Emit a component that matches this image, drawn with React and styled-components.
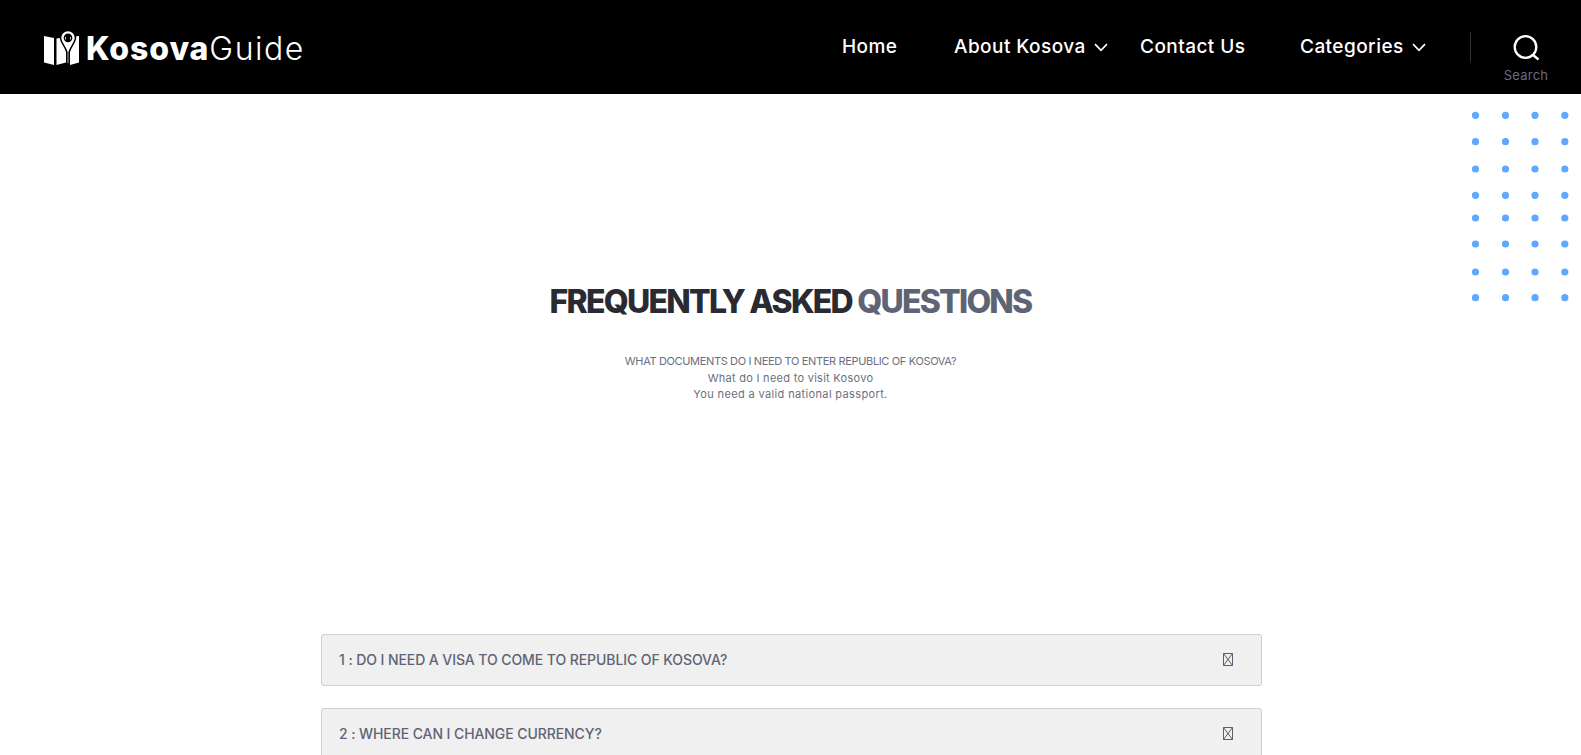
import React from "react";
import styled, { createGlobalStyle } from "styled-components";

const Global = createGlobalStyle`
  html, body { margin: 0; padding: 0; background: #fff; }
  body { font-family: Inter, "Liberation Sans", sans-serif; }
  #root { height: 755px; overflow: hidden; position: relative; }
  * { box-sizing: border-box; }
`;

const Header = styled.header`
  height: 94px;
  background: #000;
  display: flex;
  align-items: center;
  padding: 0 0 0 44px;
`;
const Logo = styled.a`
  display: flex;
  align-items: center;
  gap: 7px;
  color: #fff;
`;
const LogoText = styled.span`
  margin-top: 4px;
  font-size: 32px;
  line-height: 36px;
  letter-spacing: 0.9px;
  font-weight: 800;
`;
const LogoLight = styled.span`
  font-weight: 300;
  letter-spacing: 1.5px;
`;
const Nav = styled.nav`
  margin-left: auto;
  align-self: stretch;
  display: flex;
  align-items: center;
`;
const NavItem = styled.a`
  display: flex;
  align-items: center;
  gap: 8px;
  width: ${(p) => p.$w}px;
  color: #fff;
  font-size: 19px;
  font-weight: 500;
  letter-spacing: 0.45px;
  line-height: 24px;
  white-space: nowrap;
`;
const SearchBox = styled.div`
  align-self: stretch;
  width: 111px;
  padding-top: 32px;
  display: flex;
  align-items: flex-start;
`;
const Divider = styled.div`
  width: 1px;
  height: 30px;
  background: #303030;
`;
const SearchInner = styled.div`
  display: flex;
  flex-direction: column;
  align-items: center;
  width: 110px;
  padding-top: 2px;
  gap: 5px;
  color: #6c6885;
  font-size: 13px;
  letter-spacing: 0.2px;
  line-height: 16px;
`;
const Dots = styled.svg`
  position: absolute;
  left: 1470px;
  top: 110px;
`;
const Hero = styled.section`
  padding-top: 188px;
  text-align: center;
`;
const Title = styled.h1`
  margin: 0;
  font-size: 32px;
  line-height: 40px;
  font-weight: 800;
  letter-spacing: -1.75px;
  color: #2a2a33;
`;
const TitleAccent = styled.span`
  color: #5f6475;
`;
const Lead = styled.div`
  margin: 31px 0 0;
  font-size: 11px;
  line-height: 16.5px;
  color: #6b6f80;
`;
const LeadLine = styled.div`
  letter-spacing: ${(p) => p.$spacing}px;
`;
const List = styled.div`
  width: 941px;
  margin: 231px 0 0 321px;
  display: flex;
  flex-direction: column;
  gap: 22px;
`;
const Card = styled.div`
  height: 52px;
  display: flex;
  align-items: center;
  justify-content: space-between;
  padding: 0 28px 0 17px;
  background: #f0f0f0;
  border: 1px solid #cfcfcf;
  border-radius: 3px;
  color: #5f6475;
  font-size: 14px;
  font-weight: 500;
  letter-spacing: -0.08px;
`;
const MissingGlyph = styled.svg`
  margin-top: -1px;
`;

const Chevron = () => (
  <svg width="14" height="9" viewBox="0 0 14 9" fill="none" stroke="#fff" strokeWidth="1.7">
    <path d="M1 1.2 7 7.4l6-6.200" />
  </svg>
);

const Missing = () => (
  <MissingGlyph width="10" height="13" viewBox="0 0 10 13" fill="none" stroke="#5a5f70" strokeWidth="1">
    <path d="M.5.5h9v12h-9zM.5.5l9 12M9.500.5l-9 12" />
  </MissingGlyph>
);

const dotX = [5.5, 35.5, 65, 94.8];
const dotY = [5.3, 31.7, 59, 85.3, 108, 134, 162, 187.7];

export default function App() {
  return (
    <>
      <Global />
      <Header>
        <Logo>
          <svg width="35" height="35" viewBox="0 0 35 35" fill="#fff">
            <path d="M0 6 10 8v27L0 32.500z" />
            <path d="M12.500 8.500 22 7v25.500L12.500 35z" />
            <path d="M26 7l9-1v26.500L26 35z" />
            <path
              fillRule="evenodd"
              stroke="#000"
              strokeWidth="1.500"
              d="M24 .5c4.200 0 7.500 3.200 7.500 7.300 0 4.500-4.800 8.700-6.400 14.500V34h-2.200V22.300C21.300 16.500 16.500 12.300 16.500 7.800 16.500 3.700 19.800.5 24 .5zm0 3.700a3.600 3.600 0 1 0 0 7.200 3.600 3.600 0 0 0 0-7.200z"
            />
          </svg>
          <LogoText>
            Kosova<LogoLight>Guide</LogoLight>
          </LogoText>
        </Logo>
        <Nav>
          <NavItem $w={112}>Home</NavItem>
          <NavItem $w={186}>
            About Kosova <Chevron />
          </NavItem>
          <NavItem $w={160}>Contact Us</NavItem>
          <NavItem $w={170}>
            Categories <Chevron />
          </NavItem>
          <SearchBox>
            <Divider />
            <SearchInner>
              <svg width="28" height="28" viewBox="0 0 28 28" fill="none" stroke="#fff" strokeWidth="2.300">
                <circle cx="13.500" cy="13" r="10.800" />
                <path d="m21 21 5.500 4.500" />
              </svg>
              Search
            </SearchInner>
          </SearchBox>
        </Nav>
      </Header>
      <Dots width="102" height="196" viewBox="0 0 102 196" fill="#5fa8ff">
        {dotY.map((y) => dotX.map((x) => <circle key={`${x}-${y}`} cx={x} cy={y} r="3.6" />))}
      </Dots>
      <Hero>
        <Title>
          FREQUENTLY ASKED <TitleAccent>QUESTIONS</TitleAccent>
        </Title>
        <Lead>
          <LeadLine $spacing={-0.35}>WHAT DOCUMENTS DO I NEED TO ENTER REPUBLIC OF KOSOVA?</LeadLine>
          <LeadLine $spacing={0.28}>What do I need to visit Kosovo</LeadLine>
          <LeadLine $spacing={0.36}>You need a valid national passport.</LeadLine>
        </Lead>
      </Hero>
      <List>
        <Card>
          1 : DO I NEED A VISA TO COME TO REPUBLIC OF KOSOVA?
          <Missing />
        </Card>
        <Card>
          2 : WHERE CAN I CHANGE CURRENCY?
          <Missing />
        </Card>
      </List>
    </>
  );
}
